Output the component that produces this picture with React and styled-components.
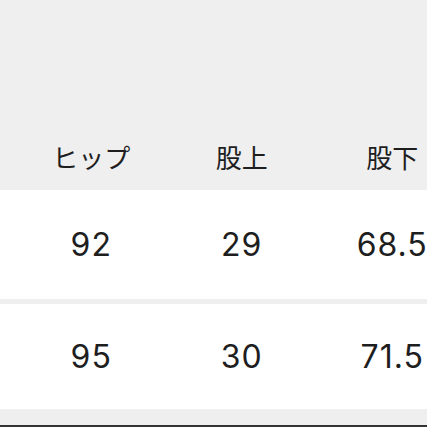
import React from "react"
import styled, { createGlobalStyle } from "styled-components"

const GlobalStyle = createGlobalStyle`
  html, body {
    margin: 0;
    padding: 0;
    background: #efefef;
  }
`

const Page = styled.div`
  width: 427px;
  height: 427px;
  overflow: hidden;
  background: #efefef;
  display: flex;
  flex-direction: column;
  font-family: "Noto Sans CJK JP", "Noto Sans", sans-serif;
  color: #1e1e1e;
`

const Spacer = styled.div`
  height: 126px;
  flex: none;
`

const Row = styled.div`
  flex: none;
  display: grid;
  grid-template-columns: repeat(3, 150.5px);
  padding-left: 16px;
  align-items: center;
  height: ${p => p.$height}px;
  margin-bottom: ${p => p.$gap || 0}px;
  background: ${p => (p.$head ? "transparent" : "#ffffff")};
`

const Cell = styled.div`
  text-align: center;
  white-space: nowrap;
  line-height: 1;
  font-weight: 400;
  font-size: 26px;
  margin-top: -3px;
`

const NumCell = styled(Cell)`
  font-family: Inter, "Liberation Sans", sans-serif;
  font-size: 32px;
  letter-spacing: 1px;
  margin-top: 0;
`

const Fill = styled.div`
  flex: 1;
`

const BottomLine = styled.div`
  flex: none;
  height: 2px;
  background: #333;
`

const header = ["ヒップ", "股上", "股下"]
const rows = [
  { values: ["92", "29", "68.5"], height: 109, gap: 5 },
  { values: ["95", "30", "71.5"], height: 105, gap: 0 }
]

export default function App() {
  return (
    <Page>
      <GlobalStyle />
      <Spacer />
      <Row $head $height={64}>
        {header.map(h => (
          <Cell key={h}>{h}</Cell>
        ))}
      </Row>
      {rows.map((r, i) => (
        <Row key={i} $height={r.height} $gap={r.gap}>
          {r.values.map((v, j) => (
            <NumCell key={j}>{v}</NumCell>
          ))}
        </Row>
      ))}
      <Fill />
      <BottomLine />
    </Page>
  )
}
